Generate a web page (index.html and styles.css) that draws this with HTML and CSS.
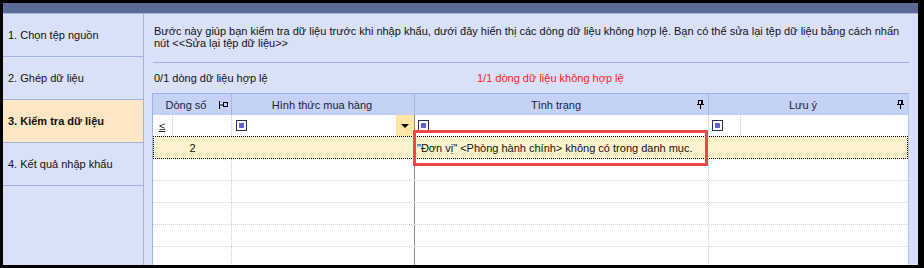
FILE: index.html
```html
<!DOCTYPE html>
<html lang="vi">
<head>
    <meta charset="UTF-8">
    <title>Nhập khẩu dữ liệu</title>
    <link rel="stylesheet" href="styles.css">
</head>
<body>
    <div class="window">
        <div class="titlebar"></div>
        <div class="content">
            <!-- Steps -->
            <ul class="steps">
                <li>1. Chọn tệp nguồn</li>
                <li>2. Ghép dữ liệu</li>
                <li class="active">3. Kiểm tra dữ liệu</li>
                <li>4. Kết quả nhập khẩu</li>
            </ul>

            <div class="main">
                <p class="desc">Bước này giúp bạn kiểm tra dữ liệu trước khi nhập khẩu, dưới đây hiển thị các dòng dữ liệu không hợp lệ. Bạn có thể sửa lại tệp dữ liệu bằng cách nhấn<br>nút &lt;&lt;Sửa lại tệp dữ liệu&gt;&gt;</p>
                <div class="sep"></div>
                <div class="counts">
                    <span>0/1 dòng dữ liệu hợp lệ</span>
                    <span class="invalid">1/1 dòng dữ liệu không hợp lệ</span>
                </div>

                <div class="grid">
                    <div class="row head">
                        <div class="cell c1"><span class="title">Dòng số</span>
                            <svg class="pin" width="9" height="8" viewBox="0 0 9 8"><path d="M0.5 0v8M0.5 4h4" stroke="#000" fill="none"/><rect x="4.5" y="1.5" width="4" height="4" fill="none" stroke="#000"/></svg>
                        </div>
                        <div class="cell c2"><span class="title">Hình thức mua hàng</span></div>
                        <div class="cell c3"><span class="title">Tình trạng</span>
                            <svg class="pin" width="8" height="9" viewBox="0 0 8 9"><rect x="1.5" y="0.5" width="4" height="4" fill="none" stroke="#000"/><path d="M0 4.5h7M3.5 4.5v4.5" stroke="#000" fill="none"/><path d="M4.5 1v3" stroke="#000"/></svg>
                        </div>
                        <div class="cell c4"><span class="title">Lưu ý</span>
                            <svg class="pin" width="8" height="9" viewBox="0 0 8 9"><rect x="1.5" y="0.5" width="4" height="4" fill="none" stroke="#000"/><path d="M0 4.5h7M3.5 4.5v4.5" stroke="#000" fill="none"/><path d="M4.5 1v3" stroke="#000"/></svg>
                        </div>
                    </div>

                    <div class="row filter">
                        <div class="cell c1"><span class="op">≤</span><span class="opsep"></span></div>
                        <div class="cell c2"><span class="check"></span><span class="drop"></span></div>
                        <div class="cell c3"><span class="check"></span></div>
                        <div class="cell c4"><span class="check"></span><span class="opsep"></span></div>
                    </div>

                    <div class="row data">
                        <div class="cell c1 num">2</div>
                        <div class="cell c2"></div>
                        <div class="cell c3">"Đơn vị" &lt;Phòng hành chính&gt; không có trong danh mục.<span class="mark"></span></div>
                        <div class="cell c4"></div>
                    </div>

                    <div class="row empty"><div class="cell c1"></div><div class="cell c2"></div><div class="cell c3"></div><div class="cell c4"></div></div>
                    <div class="row empty"><div class="cell c1"></div><div class="cell c2"></div><div class="cell c3"></div><div class="cell c4"></div></div>
                    <div class="row empty"><div class="cell c1"></div><div class="cell c2"></div><div class="cell c3"></div><div class="cell c4"></div></div>
                    <div class="row empty"><div class="cell c1"></div><div class="cell c2"></div><div class="cell c3"></div><div class="cell c4"></div></div>
                    <div class="row empty"><div class="cell c1"></div><div class="cell c2"></div><div class="cell c3"></div><div class="cell c4"></div></div>
                </div>
            </div>
        </div>
    </div>
</body>
</html>
```

FILE: styles.css
```css
* {
    margin: 0;
    padding: 0;
    box-sizing: border-box;
}

body {
    background: #000;
    padding: 3px;
    font-family: "Liberation Sans", Arial, sans-serif;
    font-size: 11px;
    color: #111;
    overflow: hidden;
}

.window {
    width: 915px;
    height: 262px;
    background: #d9e1f9;
    display: flex;
    flex-direction: column;
    overflow: hidden;
}

.titlebar {
    height: 11px;
    background: #5c6a98;
    border-bottom: 1px solid #a9b7e6;
    flex-shrink: 0;
}

.content {
    flex: 1;
    display: flex;
    min-height: 0;
}

/* Steps sidebar */
.steps {
    list-style: none;
    width: 141px;
    border-right: 1px solid #9fb1e6;
    flex-shrink: 0;
}

.steps li {
    height: 43px;
    border-bottom: 1px solid #9fb1e6;
    display: flex;
    align-items: center;
    padding-left: 5px;
}

.steps li.active {
    background: #fce6c3;
    font-weight: bold;
}

/* Main panel */
.main {
    flex: 1;
    display: flex;
    flex-direction: column;
    padding: 0 9px 0 8px;
    min-width: 0;
}

.desc {
    margin-top: 11px;
    padding-left: 2px;
    line-height: 12px;
    white-space: nowrap;
}

.sep {
    height: 1px;
    background: #9fb1e6;
    margin: 13px 0 0 1px;
}

.counts {
    margin-top: 9px;
    line-height: 12px;
    padding-left: 2px;
    display: grid;
    grid-template-columns: 323px 1fr;
}

.invalid {
    color: #ff1a1a;
}

/* Grid */
.grid {
    margin-top: 9px;
    flex: 1;
    background: #fff;
    border-left: 1px solid #9fb1e6;
    border-top: 1px solid #9fb1e6;
    border-right: 1px solid #b8c6ee;
    overflow: hidden;
}

.row {
    display: grid;
    grid-template-columns: 79px 183px 294px 199px;
}

.cell {
    position: relative;
    display: flex;
    align-items: center;
    white-space: nowrap;
}

.row .c1,
.row .c3 {
    border-right: 1px dotted #cfcfcf;
}

.row .c2 {
    border-right: 1px solid #8c8c8c;
}

.head {
    height: 21px;
    background: #c4d2f5;
}

.head .cell {
    border-right: 1px solid #a6b7e8;
    padding-right: 2px;
    color: #1c1c3a;
}

.head .c2 {
    border-right: 1px solid #a6b7e8;
}

.head .c4 {
    border-right: none;
}

.head .title {
    flex: 1;
    text-align: center;
}

.pin {
    flex-shrink: 0;
    margin-right: 1px;
}

.filter {
    height: 21px;
}

.op {
    width: 19px;
    padding-left: 6px;
    text-decoration: underline;
}

.opsep {
    align-self: stretch;
    border-right: 1px dotted #cfcfcf;
}

.filter .c4 .opsep {
    width: 18px;
}

.check {
    width: 11px;
    height: 11px;
    margin-left: 3px;
    border: 1px solid #2e2e5c;
    background: #fff;
    padding: 2px;
    background-clip: content-box;
    background-color: #6161c9;
    box-shadow: inset 0 0 0 2px #fff;
}

.filter .c2 .check {
    margin-left: 4px;
}

.drop {
    margin-left: auto;
    align-self: stretch;
    width: 18px;
    background: #fde6a6;
    position: relative;
}

.drop::after {
    content: "";
    position: absolute;
    left: 5px;
    top: 9px;
    border-left: 4px solid transparent;
    border-right: 4px solid transparent;
    border-top: 4px solid #000;
}

.data {
    height: 23px;
    background: #fef3cf;
    position: relative;
}

.data::after {
    content: "";
    position: absolute;
    inset: 0;
    border: 1px dotted #000;
    pointer-events: none;
}

.data .cell {
    border-right: none;
}

.data .num {
    justify-content: center;
}

.data .c3 {
    padding-left: 2px;
    z-index: 1;
}

.mark {
    position: absolute;
    left: -2px;
    top: -6px;
    width: 295px;
    height: 36px;
    border: 3px solid #f24545;
}

.empty {
    height: 22px;
    border-bottom: 1px dotted #d2d2d2;
}
```
